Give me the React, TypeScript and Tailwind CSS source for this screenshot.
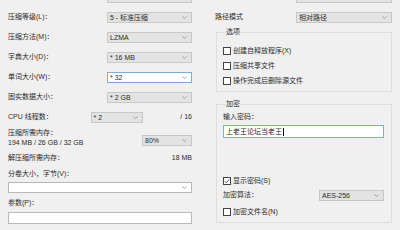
import type { ReactNode } from 'react'

function Chevron() {
  return (
    <svg width="5" height="3" viewBox="0 0 5 3" className="shrink-0">
      <path d="M0.5 0.5 L2.5 2.5 L4.5 0.5" fill="none" stroke="#8a8a8a" strokeWidth="0.8" />
    </svg>
  )
}

function Combo({ text = '', className = '', focused = false, white = false }: { text?: string; className?: string; focused?: boolean; white?: boolean }) {
  const look = focused
    ? 'bg-white border-[#7aaee0]'
    : white
      ? 'bg-white border-[#b8b8b8]'
      : 'bg-[#e3e3e3] border-[#c8c8c8]'
  return (
    <div className={`h-[11px] border flex items-center justify-between pl-[2px] pr-[4px] ${look} ${className}`}>
      <span className="leading-none whitespace-nowrap">{text}</span>
      <Chevron />
    </div>
  )
}

function Check({ checked = false, children }: { checked?: boolean; children: ReactNode }) {
  return (
    <div className="h-[15px] flex items-center gap-[2px]">
      <div className="w-[8px] h-[8px] border border-[#444] bg-white flex items-center justify-center">
        {checked && (
          <svg width="6" height="6" viewBox="0 0 6 6">
            <path d="M0.8 3.2 L2.4 4.8 L5.3 1.2" fill="none" stroke="#444" strokeWidth="0.8" />
          </svg>
        )}
      </div>
      <span className="leading-none whitespace-nowrap">{children}</span>
    </div>
  )
}

function Row({ label, children }: { label: string; children: ReactNode }) {
  return (
    <div className="h-[20px] flex items-center">
      <span className="whitespace-nowrap">{label}</span>
      {children}
    </div>
  )
}

export default function App() {
  return (
    <div
      className="w-[400px] h-[230px] overflow-hidden bg-[#f0f0f0] text-[#2b2b2b] text-[7px] flex"
      style={{ fontFamily: '"Liberation Sans", "Noto Sans CJK SC", sans-serif' }}
    >
      {/* left column */}
      <div className="ml-[8px] w-[184px] -mt-[13px] flex flex-col">
        <Row label="">
          <Combo className="ml-auto w-[85px]" text="" />
        </Row>
        <Row label="压缩等级(L)：">
          <Combo className="ml-auto w-[85px]" text="5 - 标准压缩" />
        </Row>
        <Row label="压缩方法(M)：">
          <Combo className="ml-auto w-[85px]" text="LZMA" />
        </Row>
        <Row label="字典大小(D)：">
          <Combo className="ml-auto w-[85px]" text="* 16 MB" />
        </Row>
        <Row label="单词大小(W)：">
          <Combo className="ml-auto w-[85px]" text="* 32" focused />
        </Row>
        <Row label="固实数据大小：">
          <Combo className="ml-auto w-[85px]" text="* 2 GB" />
        </Row>
        <Row label="CPU 线程数：">
          <Combo className="ml-auto w-[52px]" text="* 2" />
          <span className="ml-auto">/ 16</span>
        </Row>
        <div className="pt-[1px] flex">
          <div className="flex flex-col leading-[10px]">
            <span>压缩所需内存：</span>
            <span>194 MB / 26 GB / 32 GB</span>
          </div>
          <Combo className="ml-auto mt-[7px] w-[50px]" text="80%" />
        </div>
        <div className="h-[20px] flex items-center justify-between">
          <span>解压缩所需内存：</span>
          <span>18 MB</span>
        </div>
        <span className="mt-[1px] leading-[10px]">分卷大小，字节(V)：</span>
        <Combo className="mt-[3px] w-full" white />
        <span className="mt-[5px] leading-[10px]">参数(P)：</span>
        <div className="mt-[4px] h-[12px] w-full bg-white border border-[#b8b8b8]" />
      </div>

      {/* right column */}
      <div className="ml-[8px] w-[192px] -mt-[13px] flex flex-col">
        <Row label="">
          <Combo className="ml-auto w-[96px]" text="" />
        </Row>
        <div className="h-[20px] flex items-center pl-[15px]">
          <span>路径模式</span>
          <Combo className="ml-auto w-[96px]" text="相对路径" />
        </div>

        <fieldset className="ml-[16px] border border-[#dedede] pl-[6px] pr-[7px] pb-[3px] m-0 min-w-0">
          <legend className="ml-[3px] px-0 leading-[10px]">选项</legend>
          <div className="pt-[6px] flex flex-col">
            <Check>创建自释放程序(X)</Check>
            <Check>压缩共享文件</Check>
            <Check>操作完成后删除源文件</Check>
          </div>
        </fieldset>

        <fieldset className="ml-[16px] mt-[7px] border border-[#dedede] pl-[6px] pr-[7px] pb-[3px] min-w-0">
          <legend className="ml-[3px] px-0 leading-[10px]">加密</legend>
          <div className="pt-[3px] flex flex-col">
            <span className="leading-[10px]">输入密码：</span>
            <div className="mt-[3px] h-[13px] w-full bg-white border border-[#7aaee0] flex items-center pl-[2px]">
              <span className="leading-none">上老王论坛当老王</span>
              <span className="ml-[1px] w-[1px] h-[8px] bg-[#111]" />
            </div>
            <div className="mt-[35px]">
              <Check checked>显示密码(S)</Check>
            </div>
            <div className="h-[14px] flex items-center">
              <span>加密算法：</span>
              <Combo className="ml-auto w-[65px]" text="AES-256" />
            </div>
            <div className="mt-[2px]">
              <Check>加密文件名(N)</Check>
            </div>
          </div>
        </fieldset>
      </div>
    </div>
  )
}
